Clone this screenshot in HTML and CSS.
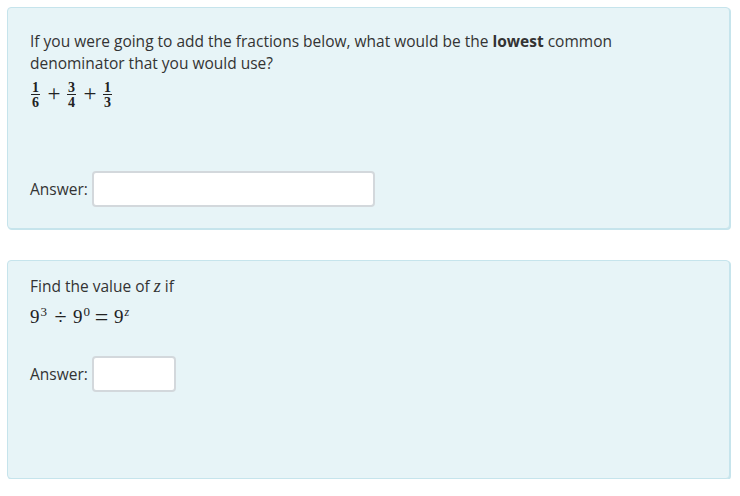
FILE: index.html
```html
<!DOCTYPE html>
<html>
<head>
<meta charset="utf-8">
<link rel="stylesheet" href="styles.css">
</head>
<body>
<div class="page">
  <div class="card card-one">
    <p class="question">If you were going to add the fractions below, what would be the <b>lowest</b> common denominator that you would use?</p>
    <div class="math frac-row">
      <span class="frac"><span class="num">1</span><span class="den">6</span></span>
      <span class="op plus">+</span>
      <span class="frac"><span class="num">3</span><span class="den">4</span></span>
      <span class="op plus">+</span>
      <span class="frac"><span class="num">1</span><span class="den">3</span></span>
    </div>
    <div class="answer">
      <label class="answer-label">Answer:</label>
      <input class="answer-input wide" type="text">
    </div>
  </div>
  <div class="card card-two">
    <p class="question">Find the value of <span class="mi">z</span> if</p>
    <div class="math eq-row">
      <span class="term">9<sup>3</sup></span><span class="op div">÷</span><span class="term">9<sup>0</sup></span><span class="op eq">=</span><span class="term">9<sup class="mi">z</sup></span>
    </div>
    <div class="answer">
      <label class="answer-label">Answer:</label>
      <input class="answer-input narrow" type="text">
    </div>
  </div>
</div>
</body>
</html>
```
FILE: styles.css
```css
html, body {
  margin: 0;
  padding: 0;
  background: #ffffff;
}
body {
  font-family: "Open Sans", "Liberation Sans", sans-serif;
  font-size: 15.5px;
  color: #333333;
}
.page {
  padding: 7px 10px 0 7px;
  display: flex;
  flex-direction: column;
  gap: 31px;
}
.card {
  background: #e7f4f7;
  border: 1px solid #c6e4ec;
  box-shadow: 1px 1px 0 #c6e4ec;
  border-radius: 4px;
  padding: 22px 22px 21px 22px;
  box-sizing: border-box;
}
.card-one {
  height: 222px;
}
.card-two {
  height: 219px;
  padding-top: 14px;
}
.question {
  margin: 0;
  line-height: 22px;
}
.question b {
  font-weight: 700;
}
.mi {
  font-family: "Liberation Serif", "DejaVu Serif", serif;
  font-style: italic;
  font-size: 18px;
}
.math {
  font-family: "Liberation Serif", "DejaVu Serif", serif;
  display: flex;
  align-items: center;
  color: #222;
}
.frac-row {
  margin-top: 7px;
  height: 27px;
  padding-left: 1px;
}
.frac {
  display: inline-flex;
  flex-direction: column;
  align-items: center;
  font-size: 14px;
  font-weight: 700;
  line-height: 11px;
}
.frac .num {
  border-bottom: 1.5px solid #222;
  padding: 0 1px 1px;
}
.frac .den {
  padding-top: 2px;
}
.op {
  display: inline-flex;
  justify-content: center;
  align-items: center;
  overflow: visible;
}
.op.plus {
  width: 12px;
  margin: 0 7px 0 8px;
  font-size: 23px;
  font-weight: 400;
  line-height: 20px;
  padding-bottom: 2px;
}
.eq-row {
  font-size: 19px;
  margin-top: 7px;
  height: 26px;
}
.eq-row sup {
  font-size: 13px;
  vertical-align: 7px;
  line-height: 0;
  padding-left: 1px;
}
.eq-row sup.mi {
  font-size: 12px;
}
.op.div {
  width: 11px;
  margin: 0 7px 0 8px;
  font-size: 22px;
}
.op.eq {
  width: 15px;
  margin: 0 5px 0 4px;
  font-size: 24px;
}
.answer {
  display: flex;
  align-items: center;
  gap: 4px;
  margin-top: 63px;
}
.card-two .answer {
  margin-top: 26px;
}
.answer-label {
  line-height: 22px;
}
.answer-input {
  height: 36px;
  flex: none;
  box-sizing: border-box;
  border: 2px solid #d3d8dc;
  border-radius: 4px;
  background: #ffffff;
  margin: 0;
  padding: 4px 8px;
  font: inherit;
}
.answer-input.wide {
  width: 283px;
}
.answer-input.narrow {
  width: 84px;
}
```
